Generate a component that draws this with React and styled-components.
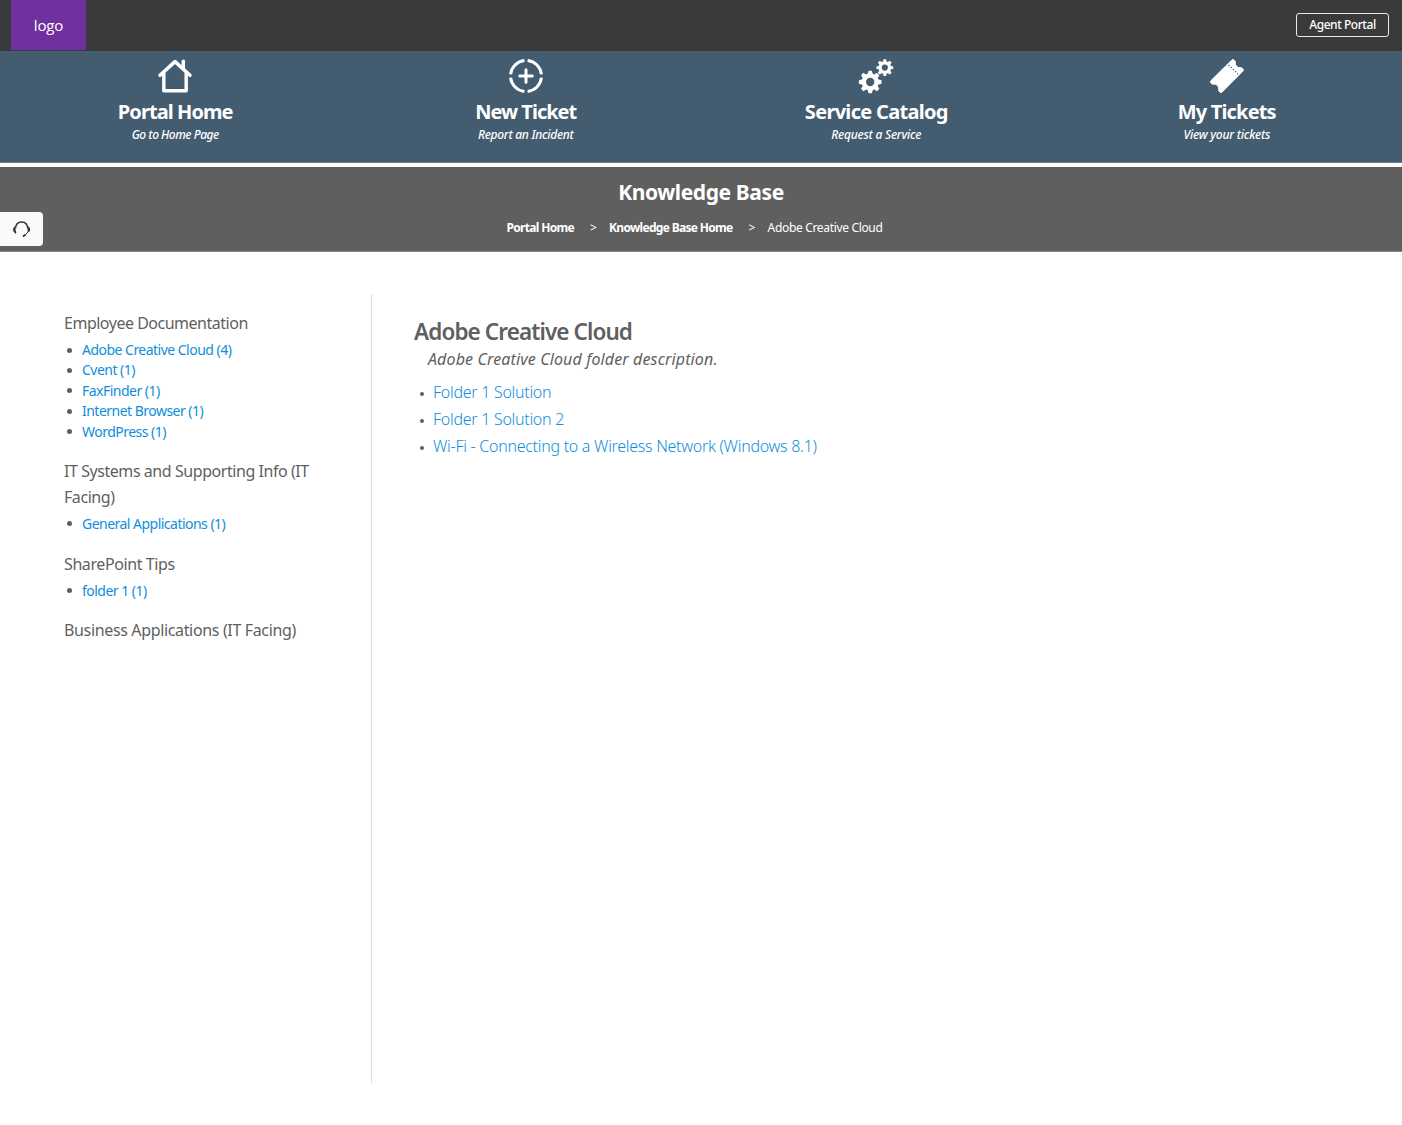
import React from 'react';
import styled, { createGlobalStyle } from 'styled-components';

const GlobalStyle = createGlobalStyle`
  * { box-sizing: border-box; }
  body {
    margin: 0;
    background: #fff;
    color: #5f5f5f;
    font-family: "Noto Sans", "Open Sans", sans-serif;
  }
  a { color: inherit; text-decoration: none; }
  h1, h2, h3, p, ul { margin: 0; padding: 0; }
  ul { list-style: none; }
`;

const TopBar = styled.header`
  display: flex;
  align-items: flex-start;
  justify-content: space-between;
  height: 51px;
  padding: 0 13px 0 11px;
  background: #3a3a3a;
`;

const Logo = styled.a`
  display: flex;
  align-items: center;
  justify-content: center;
  width: 75px;
  height: 50px;
  background: #7030a0;
  color: #fff;
  font-family: "Open Sans", "Noto Sans", sans-serif;
  font-size: 15px;
  letter-spacing: -0.15px;
`;

const PortalButton = styled.button`
  width: 93px;
  height: 24px;
  margin-top: 13px;
  padding: 0 0 1px;
  border: 1px solid #e8e8e8;
  border-radius: 3px;
  background: transparent;
  color: #fff;
  font: 500 12px/18px "Noto Sans", sans-serif;
  letter-spacing: -0.45px;
`;

const Nav = styled.nav`
  display: grid;
  grid-template-columns: repeat(4, 1fr);
  height: 112px;
  background: #435c70;
  border-bottom: 1px solid #6d8192;
`;

const NavItem = styled.a`
  display: flex;
  flex-direction: column;
  align-items: center;
  padding-top: 7px;
  color: #fff;
`;

const NavIcon = styled.svg`
  width: 36px;
  height: 36px;
  margin-bottom: 6px;
`;

const NavTitle = styled.span`
  font-size: 20px;
  font-weight: 700;
  line-height: 24px;
  letter-spacing: ${(p) => p.$track}px;
`;

const NavCaption = styled.span`
  margin-top: 2px;
  font-size: 12px;
  font-weight: 500;
  font-style: italic;
  line-height: 18px;
  letter-spacing: ${(p) => p.$track}px;
`;

const Banner = styled.section`
  position: relative;
  display: flex;
  flex-direction: column;
  align-items: center;
  height: 85px;
  margin-top: 4px;
  padding-top: 11px;
  background: #5f5f5f;
  border-bottom: 1px solid #858585;
  color: #fff;
`;

const BannerTitle = styled.h1`
  font-size: 21px;
  font-weight: 700;
  line-height: 28px;
  letter-spacing: -0.4px;
`;

const Breadcrumbs = styled.div`
  display: flex;
  margin: 13px 13px 0 0;
  font-size: 12px;
  line-height: 18px;
`;

const Crumb = styled.a`
  font-weight: ${(p) => (p.$current ? 400 : 700)};
  letter-spacing: ${(p) => (p.$current ? -0.33 : -0.68)}px;
`;

const CrumbSeparator = styled.span`
  width: 35px;
  padding-left: 16px;
`;

const SupportTab = styled.button`
  position: absolute;
  left: 0;
  top: 45px;
  display: flex;
  align-items: center;
  width: 43px;
  height: 34px;
  padding: 0 0 0 12px;
  border: 0;
  border-radius: 0 4px 4px 0;
  background: #fafafa;
`;

const Main = styled.main`
  display: flex;
  height: 873px;
  padding: 42px 42px 42px 64px;
`;

const Sidebar = styled.aside`
  flex: none;
  width: 308px;
  padding: 17px 60px 0 0;
  border-right: 1px solid #ddd;
`;

const Category = styled.section`
  margin-bottom: 18px;
`;

const CategoryTitle = styled.h3`
  font-size: 16px;
  font-weight: 400;
  line-height: 25.4px;
  letter-spacing: ${(p) => p.$track}px;
`;

const FolderList = styled.ul`
  padding-top: 3px;
`;

const FolderItem = styled.li`
  display: flex;
  align-items: center;
  height: 20.4px;
  font-size: 14px;
  letter-spacing: -0.52px;
  color: #0e8edb;
`;

const Bullet = styled.span`
  flex: none;
  width: ${(p) => p.$size}px;
  height: ${(p) => p.$size}px;
  border-radius: 50%;
  background: #5f5f5f;
`;

const FolderBullet = styled(Bullet)`
  margin: 1px 10px 0 3px;
`;

const Article = styled.article`
  flex: 1;
  padding: 23px 0 0 42px;
`;

const ArticleTitle = styled.h2`
  font-size: 22.5px;
  font-weight: 600;
  line-height: 29px;
  letter-spacing: -0.9px;
`;

const Description = styled.p`
  padding-left: 14px;
  font-size: 16px;
  font-style: italic;
  line-height: 26px;
  letter-spacing: 0.13px;
`;

const SolutionList = styled.ul`
  margin-top: 6px;
`;

const SolutionItem = styled.li`
  display: flex;
  align-items: center;
  height: 27.2px;
  font-size: 16px;
  font-weight: 300;
  letter-spacing: -0.28px;
  color: #0e8edb;
`;

const SolutionBullet = styled(Bullet)`
  margin: 4px 9px 0 6px;
`;

function HomeIcon() {
  return (
    <NavIcon viewBox="-1 -1 38 38" fill="none" stroke="#fff" strokeLinecap="round" strokeLinejoin="round">
      <path d="M2.2 17.2 18 2.8 33.8 17.2" strokeWidth="3.8" />
      <path d="M26.8 2.3v7" strokeWidth="3.6" />
      <path d="M6.2 15v18.5h23.6V15" strokeWidth="3.6" />
    </NavIcon>
  );
}

function PlusTargetIcon() {
  return (
    <NavIcon viewBox="0 0 36 36" fill="none" stroke="#fff" strokeWidth="3">
      <path d="M19.6 2.6A15.5 15.5 0 0 1 33.4 16.4M33.4 19.6A15.5 15.5 0 0 1 19.6 33.4M16.4 33.4A15.5 15.5 0 0 1 2.6 19.6M2.6 16.4A15.5 15.5 0 0 1 16.4 2.6" />
      <path d="M18 11.7v12.6M11.7 18h12.6" strokeLinecap="round" />
    </NavIcon>
  );
}

const TEETH = [0, 45, 90, 135, 180, 225, 270, 315];

function Gear({ cx, cy, r }) {
  const w = r * 0.36;
  return (
    <g transform={`translate(${cx} ${cy})`}>
      <circle r={r * 0.56} fill="none" stroke="#fff" strokeWidth={r * 0.38} />
      {TEETH.map((angle) => (
        <path
          key={angle}
          transform={`rotate(${angle})`}
          fill="#fff"
          d={`M${-w * 0.65} ${-r * 0.68}L${-w * 0.4} ${-r}H${w * 0.4}L${w * 0.65} ${-r * 0.68}Z`}
        />
      ))}
    </g>
  );
}

function GearsIcon() {
  return (
    <NavIcon viewBox="0 0 36 36">
      <Gear cx={12.2} cy={24} r={11.3} />
      <Gear cx={26.8} cy={9.6} r={8.4} />
    </NavIcon>
  );
}

function TicketIcon() {
  return (
    <NavIcon viewBox="0 0 36 36">
      <path
        fill="#fff"
        stroke="#fff"
        strokeWidth="1"
        strokeLinejoin="round"
        d="M21.2 3.6 23.4 1.6Q24.6 1.2 25.4 2.4L26.4 3.6C25.6 7.4 28.8 10.4 32.4 9.6L34 11Q34.8 12 34 13L13 34.2Q12 35 11 34.2L9.6 32.6C10.6 28.6 7.4 25.2 3.4 26.2L1.8 24.8Q1 23.8 1.8 22.8Z"
      />
      <path d="M19.6 6.8 29.4 16.6" stroke="#435c70" strokeWidth="1.1" strokeDasharray="1.5 1.5" />
    </NavIcon>
  );
}

function HeadsetIcon() {
  return (
    <svg width="20" height="18" viewBox="0 0 20 18" fill="none" stroke="#333" aria-label="Support">
      <path d="M3.4 8.4C3.8 4 6.4 2 9.6 2s5.8 2 6.2 6.4" strokeWidth="1.5" />
      <path d="M3 6.2C.8 7.6.6 10 1.6 11.4L3.4 13.8 4.4 13 3.6 10ZM16.2 6.2C18.4 7.6 18.6 10 17.6 11.4L16.2 12 15.4 11Z" fill="#333" stroke="none" />
      <path d="M16.4 11.4 13.6 14.6" strokeWidth="1" />
      <path d="M13.6 14.6 11 16.4" strokeWidth="1.8" />
    </svg>
  );
}

const NAV = [
  { title: 'Portal Home', caption: 'Go to Home Page', Icon: HomeIcon, track: -0.92, captionTrack: -0.48 },
  { title: 'New Ticket', caption: 'Report an Incident', Icon: PlusTargetIcon, track: -1, captionTrack: -0.28 },
  { title: 'Service Catalog', caption: 'Request a Service', Icon: GearsIcon, track: -0.7, captionTrack: -0.25 },
  { title: 'My Tickets', caption: 'View your tickets', Icon: TicketIcon, track: -0.82, captionTrack: -0.22 },
];

const CATEGORIES = [
  {
    title: 'Employee Documentation',
    track: -0.49,
    folders: ['Adobe Creative Cloud (4)', 'Cvent (1)', 'FaxFinder (1)', 'Internet Browser (1)', 'WordPress (1)'],
  },
  { title: 'IT Systems and Supporting Info (IT Facing)', track: -0.44, folders: ['General Applications (1)'] },
  { title: 'SharePoint Tips', track: -0.4, folders: ['folder 1 (1)'] },
  { title: 'Business Applications (IT Facing)', track: -0.35, folders: [] },
];

const SOLUTIONS = [
  'Folder 1 Solution',
  'Folder 1 Solution 2',
  'Wi-Fi - Connecting to a Wireless Network (Windows 8.1)',
];

export default function App() {
  return (
    <>
      <GlobalStyle />
      <TopBar>
        <Logo>logo</Logo>
        <PortalButton>Agent Portal</PortalButton>
      </TopBar>
      <Nav>
        {NAV.map(({ title, caption, Icon, track, captionTrack }) => (
          <NavItem key={title}>
            <Icon />
            <NavTitle $track={track}>{title}</NavTitle>
            <NavCaption $track={captionTrack}>{caption}</NavCaption>
          </NavItem>
        ))}
      </Nav>
      <Banner>
        <BannerTitle>Knowledge Base</BannerTitle>
        <Breadcrumbs>
          <Crumb>Portal Home</Crumb>
          <CrumbSeparator>&gt;</CrumbSeparator>
          <Crumb>Knowledge Base Home</Crumb>
          <CrumbSeparator>&gt;</CrumbSeparator>
          <Crumb $current>Adobe Creative Cloud</Crumb>
        </Breadcrumbs>
        <SupportTab>
          <HeadsetIcon />
        </SupportTab>
      </Banner>
      <Main>
        <Sidebar>
          {CATEGORIES.map(({ title, track, folders }) => (
            <Category key={title}>
              <CategoryTitle $track={track}>{title}</CategoryTitle>
              {folders.length > 0 && (
                <FolderList>
                  {folders.map((name) => (
                    <FolderItem key={name}>
                      <FolderBullet $size={5} />
                      <a>{name}</a>
                    </FolderItem>
                  ))}
                </FolderList>
              )}
            </Category>
          ))}
        </Sidebar>
        <Article>
          <ArticleTitle>Adobe Creative Cloud</ArticleTitle>
          <Description>Adobe Creative Cloud folder description.</Description>
          <SolutionList>
            {SOLUTIONS.map((name) => (
              <SolutionItem key={name}>
                <SolutionBullet $size={4} />
                <a>{name}</a>
              </SolutionItem>
            ))}
          </SolutionList>
        </Article>
      </Main>
    </>
  );
}
